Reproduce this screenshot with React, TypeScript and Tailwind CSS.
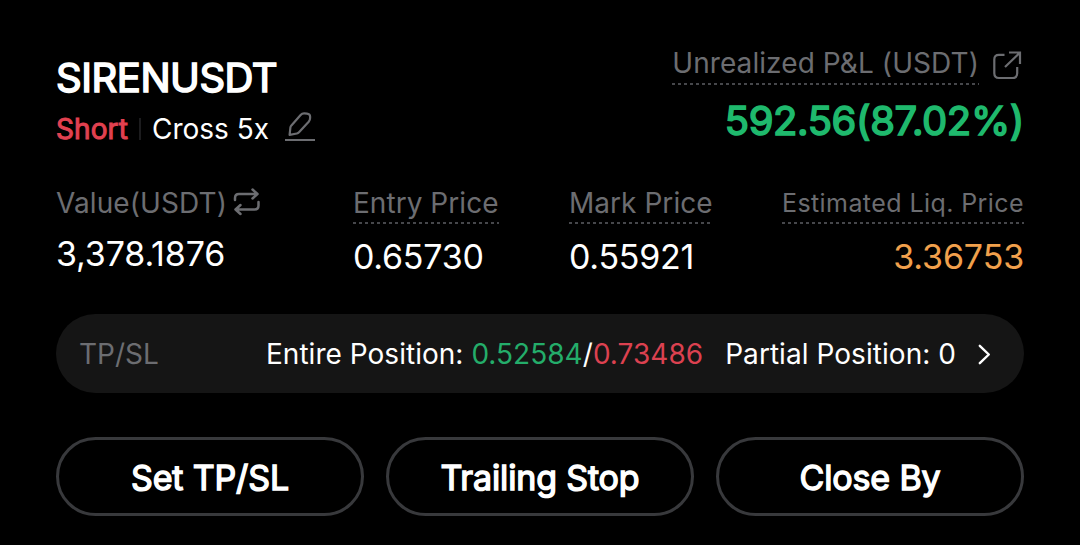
import React from "react";

function Dashes() {
  return <div className="h-[2px] w-full bg-[repeating-linear-gradient(90deg,#46474b_0_3px,transparent_3px_6px)]" />;
}

function Metric({ label, value }: { label: string; value: string }) {
  return (
    <>
      <div className="w-fit">
        <div className="h-9 whitespace-nowrap leading-[34px] tracking-[0.04px]">{label}</div>
        <Dashes />
      </div>
      <div className="mt-[13px] text-[34px] leading-10 tracking-[-0.25px] text-white">{value}</div>
    </>
  );
}

function ActionButton({ label }: { label: string }) {
  return (
    <button className="rounded-full border-[3px] border-[#38393c] pt-[2px] [-webkit-text-stroke:1.4px_currentColor]">
      {label}
    </button>
  );
}

export default function App() {
  return (
    <main className="flex h-[545px] w-[1080px] flex-col bg-black px-14 font-['Inter',sans-serif] text-white">
      <header className="flex h-[186px] justify-between">
        <div className="pt-[52px]">
          <h1 className="h-[52px] whitespace-nowrap text-[40px] font-normal leading-[52px] tracking-[-0.45px] [-webkit-text-stroke:1.6px_currentColor]">SIRENUSDT</h1>
          <div className="flex h-[50px] items-center text-[28px] leading-[50px]">
            <span className="w-[71px] tracking-[0.1px] text-[#e24150] [-webkit-text-stroke:1px_currentColor]">Short</span>
            <span className="ml-3 mr-[11px] h-[22px] w-[2px] bg-[#1c1c1e]" />
            <span>Cross 5x</span>
            <svg className="mb-[2px] ml-4 h-8 w-8" viewBox="0 0 32 32" fill="none" stroke="#6c6d71" strokeWidth="2" strokeLinejoin="round">
              <path d="M0 28H30" />
              <path strokeWidth="2.2" d="M4.6 22.8L5.4 15.5Q5.6 14.4 6.4 13.4L15.6 3Q17.1 1.3 19.3 1.4L22 1.6Q25.1 1.9 25.1 4.6V6Q25.1 8.1 23.7 9.8L14 20.3Q13.1 21.3 11.9 21.5Z" />
            </svg>
          </div>
        </div>
        <div className="flex flex-col items-end pt-[42px]">
          <div className="flex gap-[13px] text-[#6c6d71]">
            <div className="text-[28px] tracking-[0.08px]">
              <div className="h-[41px] leading-[42px]">Unrealized P&amp;L (USDT)</div>
              <Dashes />
            </div>
            <svg className="mr-[2px] mt-2 h-[30px] w-[30px]" viewBox="0 0 30 30" fill="none" stroke="currentColor" strokeWidth="2.2">
              <path d="M12.5 4.8H7Q2.3 4.8 2.3 9.5V23.3Q2.3 28 7 28H20.5Q25.2 28 25.2 23.3V17M17 2.5H28V14M28 2.5L13 17" />
            </svg>
          </div>
          <strong className="mt-[10px] text-[40px] font-normal leading-[52px] tracking-[-0.38px] text-[#1fb96d] [-webkit-text-stroke:1.6px_currentColor]">592.56(87.02%)</strong>
        </div>
      </header>
      <section className="flex h-[128px] text-[28px] text-[#6c6d71]">
        <div className="w-[297px]">
          <div className="flex h-9 gap-[6px] leading-[34px]">
            <span className="tracking-[0.1px]">Value(USDT)</span>
            <svg className="h-8 w-7" viewBox="0 0 28 32" fill="none" stroke="currentColor" strokeWidth="2.5" strokeLinecap="round" strokeLinejoin="round">
              <path d="M2 14V12Q2 8 6 8H24.5M19.5 3.5L24.5 8L19.5 12.5M25.5 16V19.5Q25.5 23.5 21.5 23.5H2.5M7.5 19L2.5 23.5L7.5 28" />
            </svg>
          </div>
          <div className="mt-3 text-[34px] leading-10 tracking-[-0.15px] text-white">3,378.1876</div>
        </div>
        <div className="w-[216px]"><Metric label="Entry Price" value="0.65730" /></div>
        <div><Metric label="Mark Price" value="0.55921" /></div>
        <div className="ml-auto flex flex-col items-end">
          <div className="text-[25px] tracking-[0.42px]">
            <div className="h-9 leading-[34px]">Estimated Liq. Price</div>
            <Dashes />
          </div>
          <div className="mt-[13px] text-[34px] leading-10 tracking-[-0.15px] text-[#f1a04c]">3.36753</div>
        </div>
      </section>
      <button className="flex h-[79px] items-center rounded-full bg-[#151515] pl-[23px] pr-[33px] text-[28px]">
        <span className="text-[#6c6d71]">TP/SL</span>
        <span className="ml-auto tracking-[0.03px]">Entire Position: <span className="text-[#24ad6a]">0.52584</span>/<span className="text-[#dc4150]">0.73486</span></span>
        <span className="ml-[22px] tracking-[0.05px]">Partial Position: 0</span>
        <svg className="ml-[22px] h-[22px] w-[13px]" viewBox="0 0 13 22" fill="none" stroke="currentColor" strokeWidth="2.4" strokeLinecap="round" strokeLinejoin="round"><path d="M1.8 2.8L10.8 11.5L1.8 20.2" /></svg>
      </button>
      <div className="mt-[44px] grid h-[79px] grid-cols-3 gap-[22px] text-[34px] tracking-[-0.15px]">
        <ActionButton label="Set TP/SL" />
        <ActionButton label="Trailing Stop" />
        <ActionButton label="Close By" />
      </div>
    </main>
  );
}
